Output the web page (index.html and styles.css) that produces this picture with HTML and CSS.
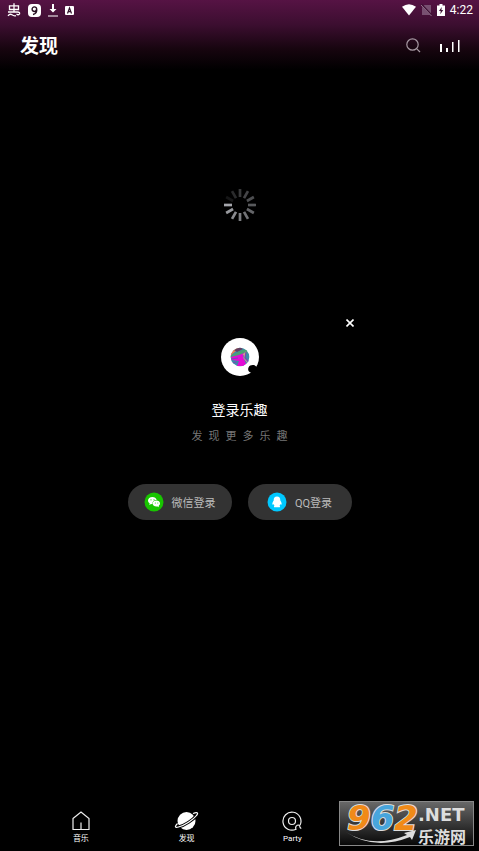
FILE: index.html
```html
<!DOCTYPE html>
<html lang="zh-CN">
<head>
<meta charset="utf-8">
<meta name="viewport" content="width=device-width, initial-scale=1">
<title>发现</title>
<link rel="stylesheet" href="styles.css">
</head>
<body>
<div class="app">
  <header class="top">
    <div class="status">
      <div class="status-group notices">
        <svg width="14" height="14" viewBox="0 0 14 14" fill="none" stroke="#fff" stroke-width="1.300"><path d="M2.500 2.800h9v3.700h-9zM7 .3v9M1 9h9.500q2.500 0 2 2q-1 1.500-3 0M1 12.800q2-2.500 4-1t4 .8"/></svg>
        <svg width="13" height="13" viewBox="0 0 13 13"><rect width="13" height="13" rx="4" fill="#fff"/><path d="M8.700 5.200A2.300 2.300 0 1 0 6.500 7.500Q8 7.500 8.700 5.200Q9.300 9.500 5 10.500" fill="none" stroke="#260f20" stroke-width="1.400"/></svg>
        <svg width="10" height="13" viewBox="0 0 10 13" fill="#fff"><path d="M4 0h2v5h2.500L5 8.500L1.500 5H4zM0 11.500h10v1H0z"/></svg>
        <svg width="9" height="9" viewBox="0 0 9 9"><rect width="9" height="9" rx="1" fill="#fff"/><path d="M2.500 7.500L4.500 2L6.500 7.500M3 5.700h3" fill="none" stroke="#30132a" stroke-width="1.200"/></svg>
      </div>
      <div class="status-group signals">
        <svg width="14" height="12" viewBox="0 0 14 12"><path d="M0 2.800Q7-2.200 14 2.800L7 11.500z" fill="#fff"/></svg>
        <svg width="11" height="12" viewBox="0 0 11 12"><path d="M3.500 1H10v10H1V3.500z" fill="#785071"/><path d="M0 0L11 11.500" stroke="#401336" stroke-width="1.800"/><path d="M0 1L10.500 12" stroke="#94728d" stroke-width="1"/></svg>
        <svg width="8" height="12" viewBox="0 0 8 12"><path d="M0 1.500h2.500V0h3v1.500H8V12H0z" fill="#fff"/><path d="M4.700 3L2 7h1.700L3.300 10.300L6.200 6H4.400z" fill="#3c1232"/></svg>
        <span class="clock">4:22</span>
      </div>
    </div>
    <div class="titlebar">
      <h1>发现</h1>
      <div class="actions">
        <button type="button" aria-label="搜索"><svg width="15" height="15" viewBox="0 0 15 15" fill="none" stroke="#a698a2" stroke-width="1.200"><circle cx="6.500" cy="6.500" r="5.700"/><path d="M10.800 10.800L14 14"/></svg></button>
        <button type="button" aria-label="播放"><svg width="20" height="14" viewBox="0 0 20 14" fill="#fff"><path d="M0 6h2v8H0zM6 10h2v4H6zM12 4h1.500v10H12zM18 2h1.500v12H18z"/></svg></button>
      </div>
    </div>
  </header>

  <main>
    <svg class="spinner" width="34" height="34" viewBox="-17 -17 34 34" stroke="#d2d4db" stroke-width="2.700">
      <path d="M-16 0h8" opacity=".78"/>
      <path d="M-16 0h8" transform="rotate(30)" opacity=".1"/>
      <path d="M-16 0h8" transform="rotate(60)" opacity=".2"/>
      <path d="M-16 0h8" transform="rotate(90)" opacity=".27"/>
      <path d="M-16 0h8" transform="rotate(120)" opacity=".32"/>
      <path d="M-16 0h8" transform="rotate(150)" opacity=".37"/>
      <path d="M-16 0h8" transform="rotate(180)" opacity=".42"/>
      <path d="M-16 0h8" transform="rotate(210)" opacity=".48"/>
      <path d="M-16 0h8" transform="rotate(240)" opacity=".54"/>
      <path d="M-16 0h8" transform="rotate(270)" opacity=".6"/>
      <path d="M-16 0h8" transform="rotate(300)" opacity=".66"/>
      <path d="M-16 0h8" transform="rotate(330)" opacity=".72"/>
    </svg>
    <section class="login">
      <button class="close" type="button" aria-label="关闭"><svg width="8" height="8" viewBox="0 0 8 8" stroke="#fff" stroke-width="1.600"><path d="M.5.5l7 7M7.500.5l-7 7"/></svg></button>
      <svg class="logo" width="38" height="38" viewBox="0 0 38 38">
        <defs><clipPath id="disc"><circle cx="19" cy="19" r="9.300"/></clipPath></defs>
        <circle cx="19" cy="19" r="19" fill="#fff"/>
        <g clip-path="url(#disc)">
          <path d="M9 9h20v20H9z" fill="#3c8daa"/>
          <path d="M9 9h9l-3 4l-6 5z" fill="#ed7c51"/>
          <path d="M13 12l6-3l3 2l-6 3z" fill="#653f63"/>
          <path d="M9 18l12-6l6-1l-1 5l-6 1l-7 2l-3 2z" fill="#4aa174"/>
          <path d="M10 19l8-2l5-2l-1 4l4 9H16l2-5l-7-1z" fill="#e30bd5"/>
          <path d="M22 17l2-2l-1 5l4 5" fill="none" stroke="#d29391" stroke-width="1.200"/>
          <path d="M10 21l7-1M25 14l-1 6l4 4M11 25l5-1" fill="none" stroke="#764bb5" stroke-width="1.200"/>
        </g>
        <path d="M38 38V28.500L35.500 29C34.500 26.500 29 26 27.500 29.500C26.500 32 27.500 34 30.500 35L31 38z" fill="#000"/>
      </svg>
      <h2>登录乐趣</h2>
      <p>发现更多乐趣</p>
      <div class="choices">
        <button class="choice" type="button">
          <svg width="20" height="20" viewBox="0 0 20 20"><circle cx="10" cy="10" r="9.500" fill="#18c500"/><path d="M8.500 5C5.800 5 4 6.600 4 8.600c0 1.200.7 2.200 1.700 2.900L5.200 13l1.900-1q.7.2 1.500.1C8 9.500 10.200 7.800 12.700 7.900C12.200 6.200 10.500 5 8.500 5z" fill="#fff"/><path d="M12.400 8.600c-2.200 0-3.700 1.300-3.700 3s1.600 3 3.700 3l1.200-.2l1.400.8l-.4-1.300c.9-.6 1.400-1.400 1.400-2.300c0-1.700-1.600-3-3.600-3z" fill="#fff"/><g fill="#18c500"><circle cx="7" cy="7.800" r=".6"/><circle cx="10" cy="7.800" r=".6"/><circle cx="11.300" cy="11" r=".5"/><circle cx="13.800" cy="11" r=".5"/></g></svg>
          <span>微信登录</span>
        </button>
        <button class="choice" type="button">
          <svg width="20" height="20" viewBox="0 0 20 20"><circle cx="10" cy="10" r="9.500" fill="#00c8ff"/><path d="M10 4.500c-2.300 0-3.400 1.600-3.300 4C5.800 9.800 5.200 11 5.400 12.300c.2.700.7.400 1.200-.2q.2 1 .9 1.600c-.8.500-.8 1.600.2 1.600h4.600c1 0 1-1.100.2-1.600q.7-.6.9-1.600c.5.600 1 .9 1.200.2c.2-1.300-.4-2.500-1.300-3.800c.1-2.400-1-4-3.300-4z" fill="#fff"/></svg>
          <span>QQ登录</span>
        </button>
      </div>
    </section>
  </main>

  <nav class="tabs">
    <a href="#music"><svg width="20" height="20" viewBox="0 0 20 20" fill="none" stroke="#eee" stroke-width="1.200"><path d="M2 7.500L10 1L18 7.500v11H2zM10 11.500v7"/></svg><span>音乐</span></a>
    <a href="#discover"><svg width="26" height="20" viewBox="0 0 26 20"><circle cx="12.500" cy="10" r="9" fill="#fff"/><path d="M3.500 12.500C.5 15.500.5 17 4.500 16C10.500 14.500 19.500 8.500 22.500 4.500C25 1.500 23 .8 19 2.500" fill="none" stroke="#000" stroke-width="3"/><path d="M3.500 12.500C.5 15.500.5 17 4.500 16C10.500 14.500 19.500 8.500 22.500 4.500C25 1.500 23 .8 19 2.500" fill="none" stroke="#fff" stroke-width="1.200"/></svg><span>发现</span></a>
    <a href="#party"><svg width="20" height="20" viewBox="0 0 20 20" fill="none" stroke="#eee" stroke-width="1.200"><path d="M18 14.200A9 9 0 1 0 14 18.200C12.500 14.500 17.500 12 18 16.200Q18.200 17.500 19.300 17"/><circle cx="10" cy="10" r="3.500"/></svg><span>Party</span></a>
  </nav>

  <aside class="stamp">
    <svg class="swoosh" width="72" height="14" viewBox="0 0 72 14"><path d="M0 2Q26 19 61 5L58 3L70 0L66 10L64 7Q28 21 0 2z" fill="#ddd"/></svg>
    <div class="digits"><span class="orange">9</span><span class="blue">6</span><span class="orange">2</span></div>
    <div class="site"><span class="domain">.NET</span><span class="name">乐游网</span></div>
  </aside>
</div>
</body>
</html>
```
FILE: styles.css
```css
* { box-sizing: border-box; }

body {
  margin: 0;
  background: #000;
  color: #fff;
  font-family: Roboto, "Noto Sans CJK SC", sans-serif;
}

button {
  border: 0;
  padding: 0;
  background: none;
  color: inherit;
  font: inherit;
  cursor: pointer;
}

svg { display: block; flex: none; }

h1, h2, p { margin: 0; }

.app {
  position: relative;
  display: flex;
  flex-direction: column;
  min-height: 100vh;
}

.top {
  height: 70px;
  background: linear-gradient(#561344, #3c0e30 35%, #17050f 70%, #000);
}

.status {
  display: flex;
  justify-content: space-between;
  height: 20px;
  padding: 0 6px 0 7px;
}

.status-group { display: flex; align-items: center; }
.notices { gap: 7px; }
.signals { gap: 5px; }
.clock { font-size: 12px; line-height: 20px; }

.titlebar {
  display: flex;
  align-items: center;
  justify-content: space-between;
  height: 50px;
  padding: 0 19px 0 20px;
}

h1 { padding-top: 3px; font-size: 19px; line-height: 28px; font-weight: 600; }

.actions { display: flex; align-items: center; gap: 19px; }

main {
  flex: 1;
  display: flex;
  flex-direction: column;
  align-items: center;
  padding-top: 118px;
}

.login {
  display: flex;
  flex-direction: column;
  align-items: center;
  margin-top: 93px;
}

.close {
  align-self: flex-end;
  margin-right: -6px;
  padding: 4px;
}

.logo { margin-top: 7px; }

h2 {
  margin-top: 24px;
  font-size: 14px;
  line-height: 20px;
  font-weight: 400;
}

.login p {
  margin-top: 7px;
  padding-left: 6px;
  color: #777;
  font-size: 11px;
  line-height: 20px;
  letter-spacing: 6px;
}

.choices { display: flex; gap: 16px; margin-top: 37px; }

.choice {
  display: flex;
  align-items: center;
  justify-content: center;
  gap: 8px;
  width: 104px;
  height: 36px;
  border-radius: 18px;
  background: #333;
  color: #bbb;
  font-size: 11px;
}

.tabs {
  display: grid;
  grid-template-columns: repeat(4, 1fr);
  padding: 0 28px 6px;
}

.tabs a {
  display: flex;
  flex-direction: column;
  align-items: center;
  gap: 2px;
  color: #fff;
  font-size: 8px;
  line-height: 12px;
  text-decoration: none;
}

.stamp {
  position: absolute;
  right: 5px;
  bottom: 5px;
  display: flex;
  width: 135px;
  height: 45px;
  padding-left: 7px;
  border: 1px solid #888;
  background: linear-gradient(#686868, #080808);
  color: #ddd;
}

.swoosh { position: absolute; left: 6px; bottom: 1px; }

.digits {
  font: italic bold 34px/32px "DejaVu Sans", sans-serif;
  -webkit-text-stroke: 2px #ddd;
  paint-order: stroke fill;
}

.orange { color: #f08a18; }
.blue { color: #48a5dc; }

.site {
  display: flex;
  flex-direction: column;
  padding-top: 2px;
}

.domain { font: bold 18px/22px "DejaVu Sans", sans-serif; }
.name { font: bold 16px/20px "Noto Sans CJK SC", sans-serif; }
```
